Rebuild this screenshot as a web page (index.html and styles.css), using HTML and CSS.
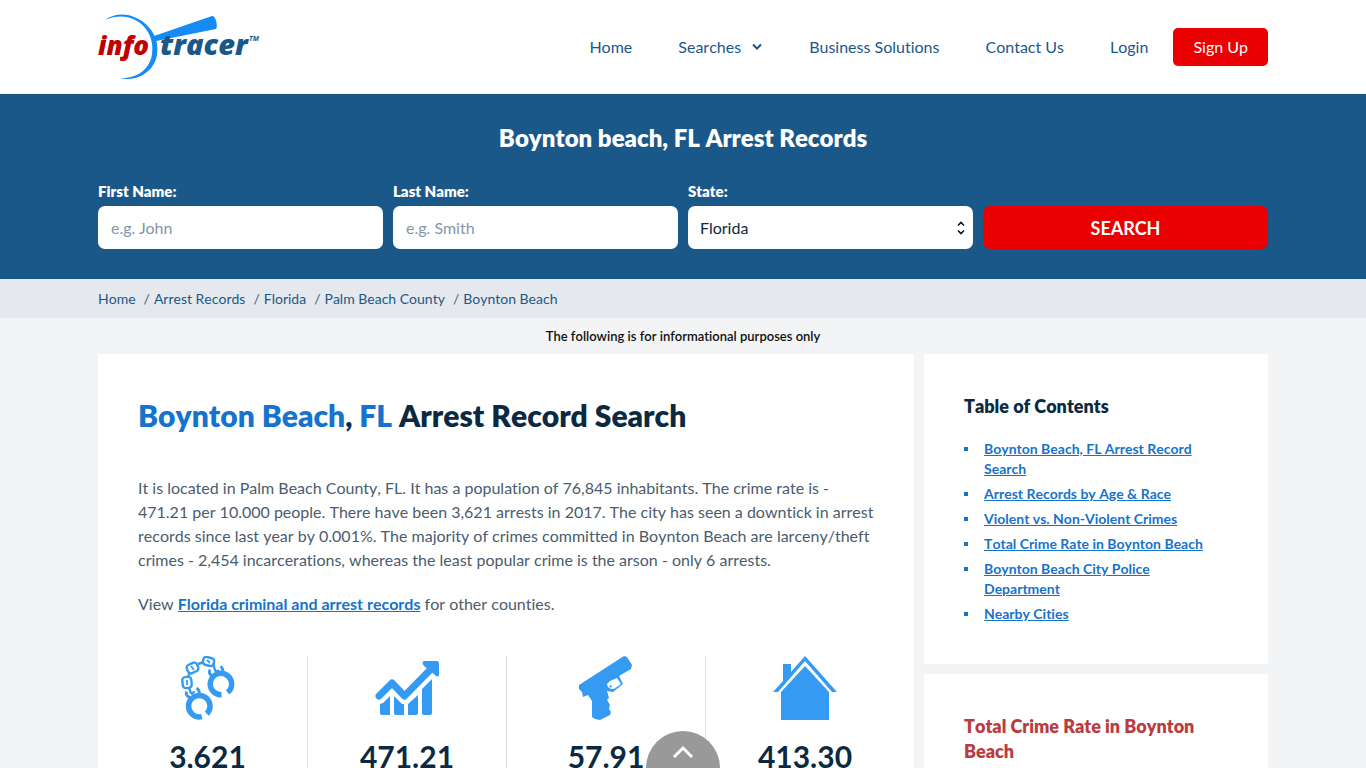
FILE: index.html
```html
<!DOCTYPE html>
<html lang="en">
<head>
<meta charset="utf-8">
<meta name="viewport" content="width=device-width, initial-scale=1">
<title>Boynton Beach, FL Arrest Records</title>
<link rel="stylesheet" href="styles.css">
</head>
<body>
<header class="site-header">
  <div class="container header-row">
    <a href="#" class="logo" aria-label="InfoTracer home">
      <svg width="164" height="70" viewBox="0 0 164 70">
        <path d="M7 8C16 2 26 1 36 5C52 11 62 27 59 43C56 60 39 70 22 66C39 67 52 57 54 42C58 17 34-4 7 8Z" fill="#168bf6"/>
        <path d="M56 24L114 4C118 3 120 15 118 17L58 29Z" fill="#168bf6"/>
        <text x="0" y="43" class="logo-info">info</text>
        <text x="62" y="43" class="logo-tracer">tracer</text>
        <text x="151" y="29" class="logo-tm">TM</text>
      </svg>
    </a>
    <nav class="nav">
      <a href="#">Home</a>
      <a href="#" class="nav-drop">Searches
        <svg width="12" height="8" viewBox="0 0 12 8"><path d="M2 1.500L6 5.500L10 1.500" fill="none" stroke="#1b588a" stroke-width="2"/></svg>
      </a>
      <a href="#">Business Solutions</a>
      <a href="#">Contact Us</a>
      <a href="#">Login</a>
    </nav>
    <a href="#" class="signup">Sign Up</a>
  </div>
</header>

<section class="hero">
  <div class="container">
    <h2 class="hero-title">Boynton beach, FL Arrest Records</h2>
    <form class="search">
      <div class="field"><label for="first">First Name:</label><input id="first" type="text" placeholder="e.g. John"></div>
      <div class="field"><label for="last">Last Name:</label><input id="last" type="text" placeholder="e.g. Smith"></div>
      <div class="field"><label for="state">State:</label>
        <div class="select-wrap">
          <select id="state"><option>Florida</option></select>
          <svg class="select-arrows" width="8" height="14" viewBox="0 0 8 14"><path d="M1 4.500L4 1.500L7 4.500M1 9.500L4 12.500L7 9.500" fill="none" stroke="#111" stroke-width="1.600"/></svg>
        </div>
      </div>
      <button type="button" class="search-btn">SEARCH</button>
    </form>
  </div>
</section>

<nav class="crumbs" aria-label="Breadcrumb">
  <ol class="container crumb-list">
    <li><a href="#">Home</a></li>
    <li><a href="#">Arrest Records</a></li>
    <li><a href="#">Florida</a></li>
    <li><a href="#">Palm Beach County</a></li>
    <li><a href="#">Boynton Beach</a></li>
  </ol>
</nav>
<p class="notice">The following is for informational purposes only</p>

<div class="container layout">
  <main class="card main">
    <div class="copy">
      <h1><span>Boynton Beach</span>, <span>FL</span> Arrest Record Search</h1>
      <p>It is located in Palm Beach County, FL. It has a population of 76,845 inhabitants. The crime rate is - 471.21 per 10.000 people. There have been 3,621 arrests in 2017. The city has seen a downtick in arrest records since last year by 0.001%. The majority of crimes committed in Boynton Beach are larceny/theft crimes - 2,454 incarcerations, whereas the least popular crime is the arson - only 6 arrests.</p>
      <p>View <a href="#">Florida criminal and arrest records</a> for other counties.</p>
    </div>
    <div class="stats">
      <div class="stat">
        <svg width="64" height="64" viewBox="0 0 64 64" fill="none" stroke="#359bf2">
          <g stroke-width="5.500">
            <path d="M51.600 36.400A10.700 10.700 0 1 0 45.500 38.700"/>
            <path d="M30.800 57.800A10.700 10.700 0 1 0 25.800 60.600"/>
          </g>
          <g stroke-width="2.800">
            <path d="M34 13.500Q32 18 36.500 20M44.500 10.500Q48 13 46.500 18"/>
            <path d="M10.500 35.500Q9 40 15 42M20.500 32Q25 35 22.500 40"/>
          </g>
          <g stroke-width="2.400">
            <rect x="27" y="1.500" width="11" height="8" rx="3" transform="rotate(15 32.500 5.500)"/>
            <rect x="11" y="7.500" width="11" height="9" rx="3" transform="rotate(-25 16.500 12)"/>
            <rect x="6.500" y="21" width="9" height="11" rx="3" transform="rotate(-5 11 26.500)"/>
            <path d="M22 8L28 6M14 16L12 21M37 7.500L39 14Q40 17 43 14M12.500 31L15 37Q17 39 18 35"/>
            <path d="M31 4L34 7M15 10L18 14M11 24V29" stroke-width="1.800"/>
          </g>
        </svg>
        <strong>3,621</strong>
      </div>
      <div class="stat">
        <svg width="64" height="64" viewBox="0 0 64 64" fill="#359bf2">
          <path d="M4 40L17 27L29.500 40L55 14" fill="none" stroke="#359bf2" stroke-width="7" stroke-linecap="round" stroke-linejoin="round"/>
          <path d="M49 5H62Q64 5 64 8V19Q63 22 60 19L49 10Q46 6 49 5Z"/>
          <path d="M5 48L8 47L15 40V59H7Q5 59 5 57ZM19 40L27 48H29V59H21Q19 59 19 57ZM33 48L43 39V57Q43 59 41 59H33ZM47 33L57 23V57Q57 59 55 59H49Q47 59 47 57Z"/>
        </svg>
        <strong>471.21</strong>
      </div>
      <div class="stat">
        <svg width="64" height="64" viewBox="0 0 64 64" fill="#359bf2" fill-rule="evenodd">
          <path d="M5 29L50 0L53 1L58 9L57 13L45 20L49 28L39 36L33 35L35 42L33 44L36 49L35 53L37 56L36 59L26 64L21 63L18 61V45L14 39L9 41L8 36L5 33ZM33 28L34 31L37 33L40 33L47 28L43 22L36 25ZM35 30L38 29L37 32Z"/>
        </svg>
        <strong>57.91</strong>
      </div>
      <div class="stat">
        <svg width="64" height="64" viewBox="0 0 64 64" fill="#359bf2">
          <path d="M0 36L10 25V8H18V16L32 0L64 36H59L32 5L5 36Z"/>
          <path d="M32 10L56 36V64H8V36Z"/>
        </svg>
        <strong>413.30</strong>
      </div>
    </div>
  </main>
  <aside class="side">
    <section class="card toc">
      <h3>Table of Contents</h3>
      <ul>
        <li><a href="#">Boynton Beach, FL Arrest Record Search</a></li>
        <li><a href="#">Arrest Records by Age &amp; Race</a></li>
        <li><a href="#">Violent vs. Non-Violent Crimes</a></li>
        <li><a href="#">Total Crime Rate in Boynton Beach</a></li>
        <li><a href="#">Boynton Beach City Police Department</a></li>
        <li><a href="#">Nearby Cities</a></li>
      </ul>
    </section>
    <section class="card rate">
      <h3>Total Crime Rate in Boynton Beach</h3>
    </section>
  </aside>
</div>

<button type="button" class="to-top" aria-label="Back to top">
  <svg width="22" height="14" viewBox="0 0 22 14"><path d="M2 12L11 3L20 12" fill="none" stroke="#fff" stroke-width="3"/></svg>
</button>
</body>
</html>
```
FILE: styles.css
```css
* { box-sizing: border-box; }
body {
  margin: 0;
  background: #f2f4f6;
  color: #4a5c6e;
  font: 16px/24px Lato, "Open Sans", sans-serif;
  font-variant-ligatures: none;
  font-kerning: none;
}
h1, h2, h3, p, ul, ol { margin: 0; padding: 0; }
input, select, button { font-family: inherit; }
.container { width: 100%; max-width: 1190px; margin: 0 auto; padding: 0 10px; }

.site-header { background: #fff; }
.header-row { display: flex; align-items: center; height: 94px; }
.logo { display: block; height: 70px; margin-right: auto; }
.logo svg { display: block; overflow: visible; }
.logo-info { font: italic 800 26px "Open Sans", sans-serif; fill: #c00000; }
.logo-tracer { font: italic 800 29px "Open Sans", sans-serif; fill: #1b588a; }
.logo-tm { font: italic 700 7px "Open Sans", sans-serif; fill: #1b588a; }
.nav { display: flex; gap: 46px; margin-right: 25px; }
.nav a { color: #1b588a; text-decoration: none; }
.nav-drop { display: flex; align-items: center; gap: 10px; }
.signup {
  padding: 7px 20px;
  border-radius: 5px;
  background: #eb0000;
  color: #fff;
  text-decoration: none;
}

.hero { padding: 29px 0 30px; background: #1b588a; color: #fff; }
.hero-title { font-size: 24px; line-height: 30px; font-weight: 800; text-align: center; }
.search {
  display: grid;
  grid-template-columns: repeat(4, 1fr);
  gap: 10px;
  align-items: end;
  margin-top: 28px;
}
.field label { display: block; padding-bottom: 5px; font-size: 15px; line-height: 20px; font-weight: 800; }
.field input, .field select {
  display: block;
  width: 100%;
  height: 43px;
  padding: 0 13px;
  border: 0;
  border-radius: 7px;
  background: #fff;
  color: #0b2a42;
  font-size: 16px;
}
.field select { padding: 0 12px; appearance: none; }
.field input::placeholder { color: #8496a8; opacity: 1; }
.select-wrap { position: relative; }
.select-arrows { position: absolute; right: 8px; top: 15px; pointer-events: none; }
.search-btn {
  height: 43px;
  border: 0;
  border-radius: 7px;
  background: #eb0000;
  color: #fff;
  font-size: 18px;
  font-weight: 700;
}

.crumbs { background: #e5e9ed; }
.crumb-list { display: flex; list-style: none; font-size: 14px; line-height: 39px; }
.crumb-list a { color: #1b588a; text-decoration: none; }
.crumb-list li + li::before { content: "/"; margin: 0 4px 0 8px; }
.notice { color: #111; font-size: 13px; line-height: 36px; font-weight: 600; text-align: center; }

.layout { display: grid; grid-template-columns: 1fr 344px; gap: 10px; align-items: start; }
.card { background: #fff; }
.main { padding: 40px 10px; }
.copy { padding: 0 30px; }
.copy h1 { margin-bottom: 40px; color: #0b2a42; font-size: 30px; line-height: 42px; font-weight: 800; }
.copy h1 span { color: #1673cd; }
.copy p { margin-bottom: 20px; }
.copy a { color: #1673cd; font-weight: 700; }
.stats { display: grid; grid-template-columns: repeat(4, 1fr); margin-top: 40px; }
.stat { display: flex; flex-direction: column; align-items: center; gap: 17px; }
.stat + .stat { border-left: 1px solid #dcdfe2; }
.stat strong { color: #0b2a42; font-size: 30px; line-height: 38px; }
.side { display: grid; gap: 10px; }
.side .card { padding: 40px; }
.side h3 { font-size: 18px; line-height: 25px; font-weight: 800; }
.toc h3 { margin-bottom: 20px; color: #0b2a42; }
.toc ul { padding-right: 20px; list-style: none; font-size: 14px; line-height: 20px; }
.toc li { display: flex; margin-bottom: 5px; }
.toc li:last-child { margin-bottom: 0; }
.toc li::before {
  content: "";
  flex: none;
  width: 4px;
  height: 4px;
  margin: 8px 16px 0 0;
  background: #1673cd;
}
.toc a { color: #1673cd; font-weight: 700; }
.rate h3 { color: #b83c40; }

.to-top {
  position: fixed;
  left: 50%;
  bottom: 0;
  width: 74px;
  height: 37px;
  margin-left: -37px;
  padding: 8px 0 0;
  border: 0;
  border-radius: 37px 37px 0 0;
  background: #999;
}
```
